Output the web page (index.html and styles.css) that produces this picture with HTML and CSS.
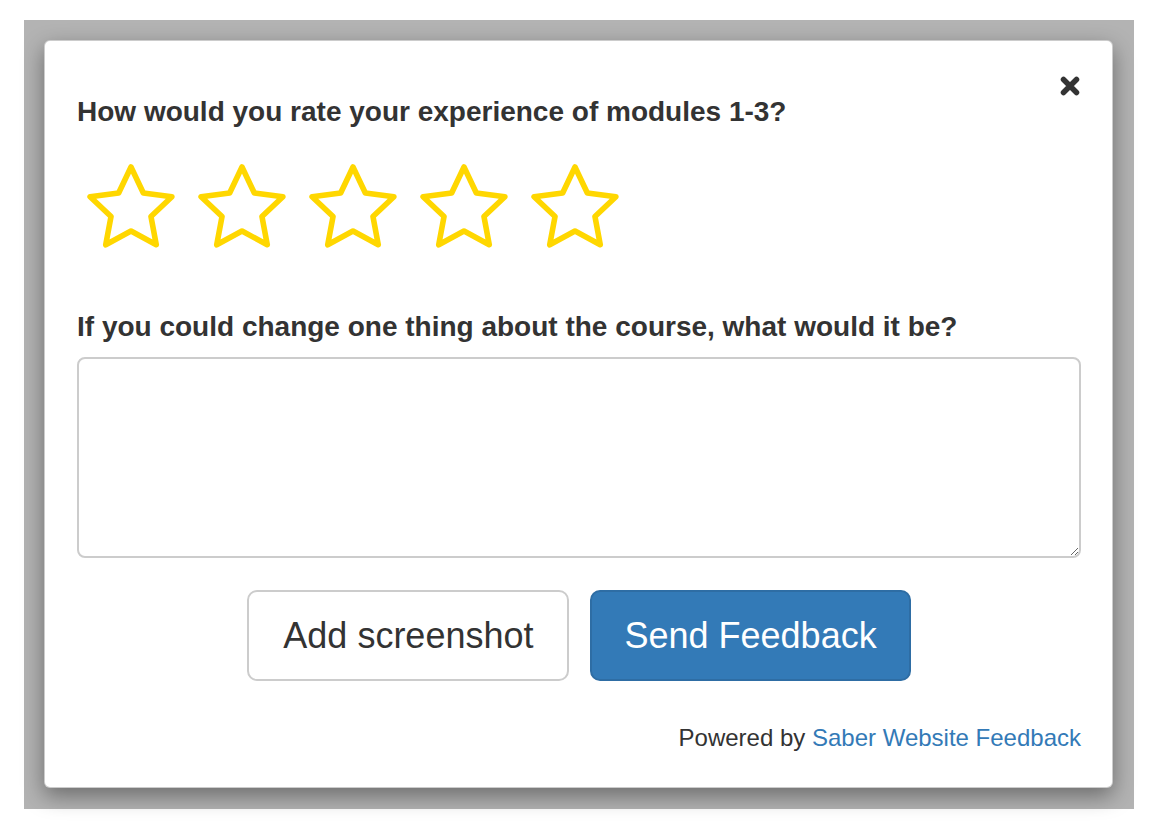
FILE: index.html
```html
<!DOCTYPE html>
<html lang="en">
<head>
<meta charset="utf-8">
<title>Feedback</title>
<link rel="stylesheet" href="styles.css">
</head>
<body>
<div class="backdrop">
  <div class="modal">
    <button class="close" aria-label="Close">
      <svg width="22" height="20" viewBox="0 0 22 20"><path d="M4.5 3.5 L17.5 16.5 M17.5 3.5 L4.5 16.5" stroke="#333" stroke-width="5.5" stroke-linecap="round" fill="none"/></svg>
    </button>
    <h2 class="question">How would you rate your experience of modules 1-3?</h2>
    <div class="stars">
      <svg class="star" width="90" height="84" viewBox="0 0 90 84"><polygon points="45,3 57.34,29.01 85.9,32.71 64.97,52.49 70.27,80.79 45,67 19.73,80.79 25.03,52.49 4.1,32.71 32.66,29.01" fill="none" stroke="#ffd700" stroke-width="5.6" stroke-linejoin="round"/></svg>
      <svg class="star" width="90" height="84" viewBox="0 0 90 84"><polygon points="45,3 57.34,29.01 85.9,32.71 64.97,52.49 70.27,80.79 45,67 19.73,80.79 25.03,52.49 4.1,32.71 32.66,29.01" fill="none" stroke="#ffd700" stroke-width="5.6" stroke-linejoin="round"/></svg>
      <svg class="star" width="90" height="84" viewBox="0 0 90 84"><polygon points="45,3 57.34,29.01 85.9,32.71 64.97,52.49 70.27,80.79 45,67 19.73,80.79 25.03,52.49 4.1,32.71 32.66,29.01" fill="none" stroke="#ffd700" stroke-width="5.6" stroke-linejoin="round"/></svg>
      <svg class="star" width="90" height="84" viewBox="0 0 90 84"><polygon points="45,3 57.34,29.01 85.9,32.71 64.97,52.49 70.27,80.79 45,67 19.73,80.79 25.03,52.49 4.1,32.71 32.66,29.01" fill="none" stroke="#ffd700" stroke-width="5.6" stroke-linejoin="round"/></svg>
      <svg class="star" width="90" height="84" viewBox="0 0 90 84"><polygon points="45,3 57.34,29.01 85.9,32.71 64.97,52.49 70.27,80.79 45,67 19.73,80.79 25.03,52.49 4.1,32.71 32.66,29.01" fill="none" stroke="#ffd700" stroke-width="5.6" stroke-linejoin="round"/></svg>
    </div>
    <h2 class="question question-2">If you could change one thing about the course, what would it be?</h2>
    <textarea class="answer"></textarea>
    <div class="actions">
      <button class="btn btn-default">Add screenshot</button>
      <button class="btn btn-primary">Send Feedback</button>
    </div>
    <p class="powered">Powered by <a href="#">Saber Website Feedback</a></p>
  </div>
</div>
</body>
</html>
```

FILE: styles.css
```css
* { box-sizing: border-box; }

html, body {
  margin: 0;
  background: #ffffff;
}

body {
  padding: 20px 22px 14px 24px;
  font-family: "Liberation Sans", Arial, Helvetica, sans-serif;
  color: #333333;
}

.backdrop {
  background: #b3b3b3;
  padding: 20px 21px 21px 20px;
}

.modal {
  position: relative;
  background: #ffffff;
  border: 1px solid rgba(0, 0, 0, 0.2);
  border-radius: 6px;
  box-shadow: 0 8px 22px rgba(0, 0, 0, 0.4);
  padding: 51px 31px 32px 32px;
}

.close {
  position: absolute;
  top: 35px;
  right: 31px;
  padding: 0;
  margin: 0;
  border: 0;
  background: transparent;
  line-height: 0;
  cursor: pointer;
}

.question {
  margin: 0;
  font-size: 28px;
  line-height: 40px;
  font-weight: 700;
  color: #333333;
}

.question-2 {
  margin-top: 59px;
}

.stars {
  display: flex;
  gap: 21px;
  margin-top: 32px;
  padding-left: 9px;
}

.star {
  display: block;
}

.answer {
  display: block;
  width: 100%;
  height: 201px;
  margin-top: 10px;
  border: 2px solid #cccccc;
  border-radius: 8px;
  background: #ffffff;
  font-family: inherit;
  font-size: 28px;
  padding: 12px 24px;
  resize: vertical;
}

.actions {
  display: flex;
  justify-content: center;
  gap: 21px;
  margin-top: 32px;
}

.btn {
  font-family: inherit;
  font-size: 36px;
  line-height: 47px;
  padding: 20px 34px;
  border: 2px solid;
  border-radius: 10px;
  cursor: pointer;
}

.btn-default {
  background: #ffffff;
  border-color: #cccccc;
  color: #333333;
}

.btn-primary {
  padding: 20px 32px;
  background: #337ab7;
  border-color: #2e6da4;
  color: #ffffff;
}

.powered {
  margin: 40px 0 0;
  text-align: right;
  font-size: 24px;
  line-height: 34px;
  color: #333333;
}

.powered a {
  color: #337ab7;
  text-decoration: none;
}
```
